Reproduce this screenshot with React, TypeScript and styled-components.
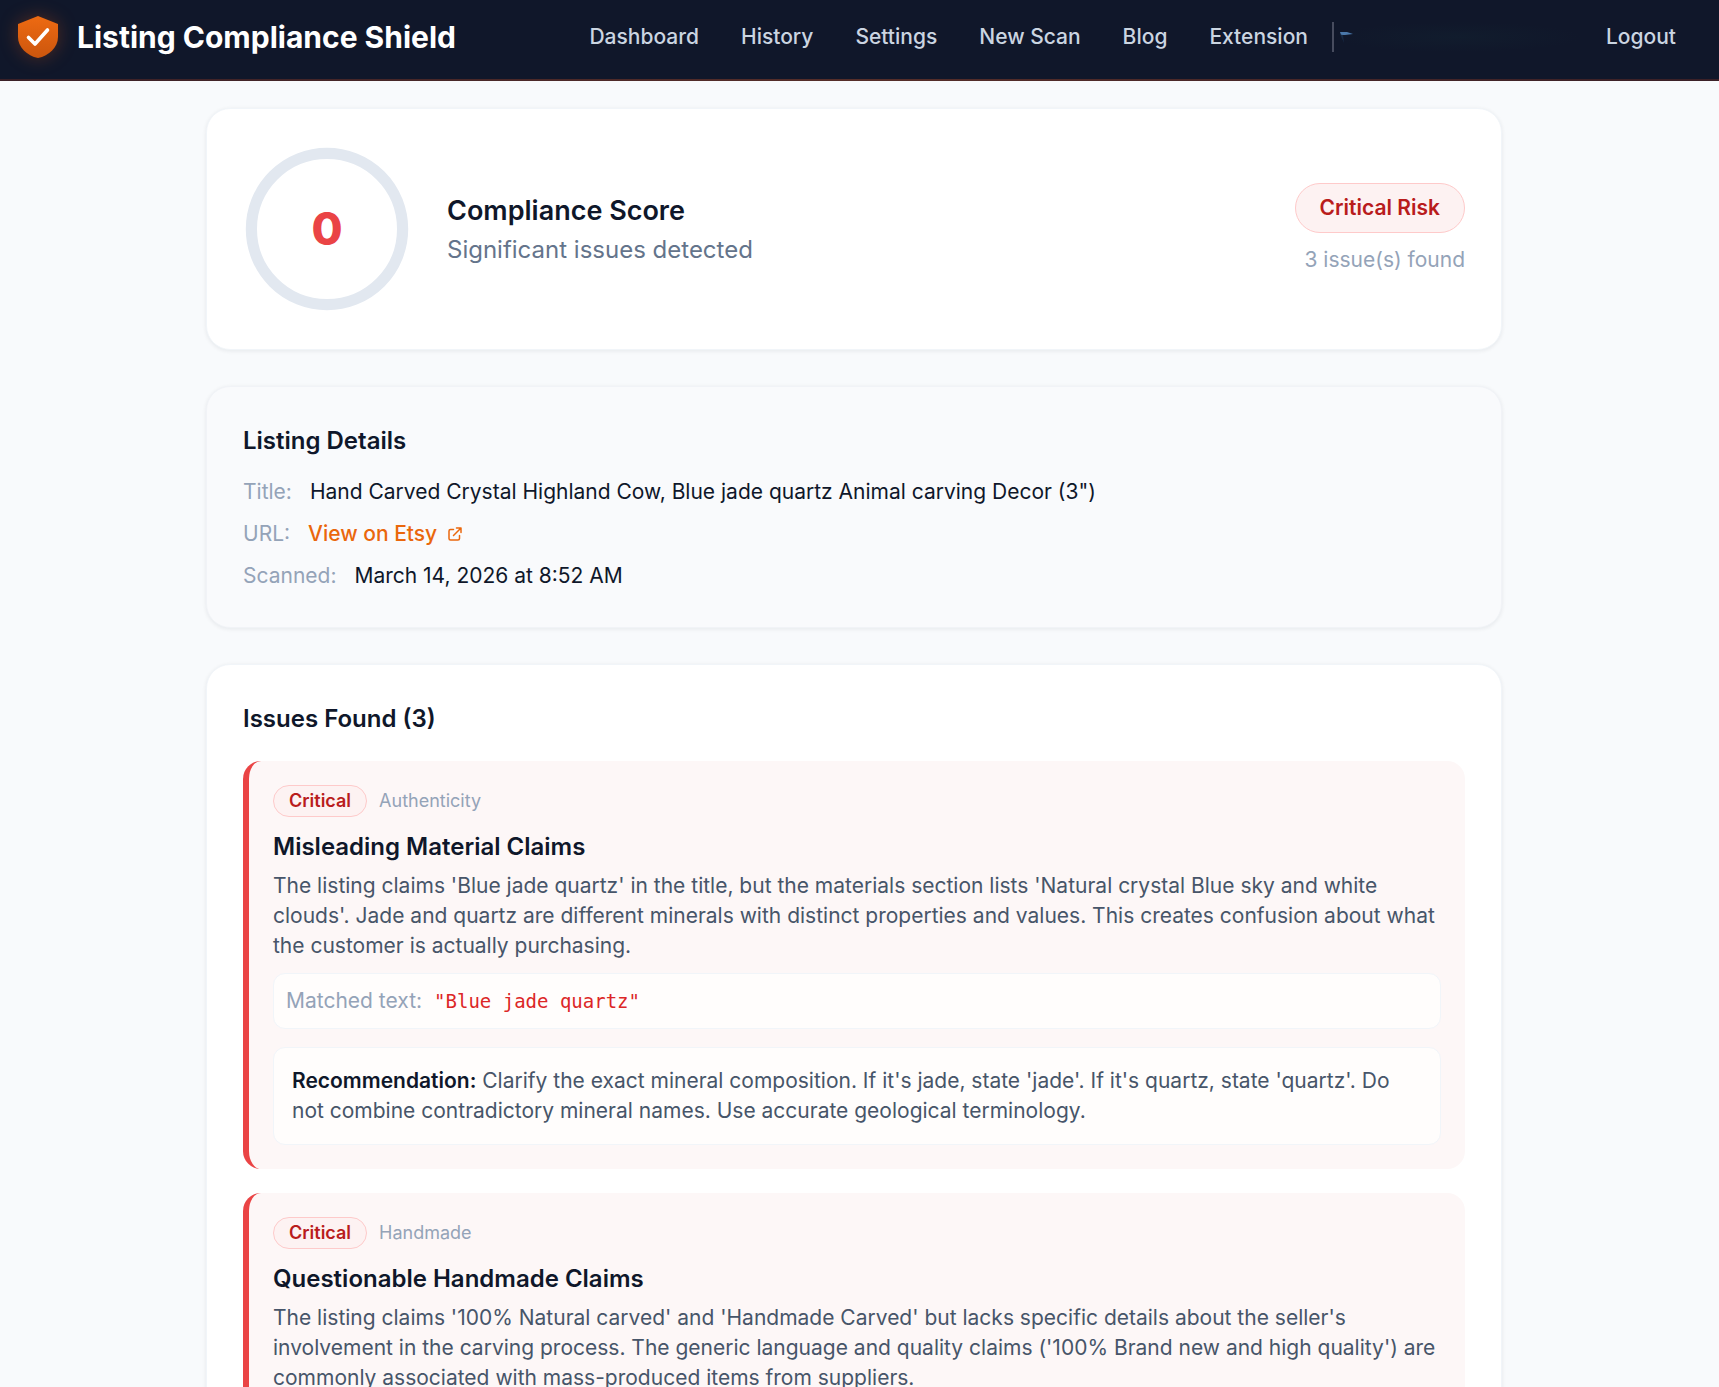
import React from "react";
import styled, { createGlobalStyle } from "styled-components";

const sans = `Inter, "Liberation Sans", sans-serif`;
const mono = `"DejaVu Sans Mono", "Liberation Mono", monospace`;

const GlobalStyle = createGlobalStyle`
  *, *::before, *::after { box-sizing: border-box; }
  html { overflow-x: hidden; }
  body {
    margin: 0;
    background: #f8fafc;
    color: #0f172a;
    font-family: ${sans};
    font-size: 21px;
    line-height: 30px;
  }
  h1, h2, h3, p, dl, dd, ul { margin: 0; padding: 0; }
`;

const Header = styled.header`
  display: flex;
  align-items: center;
  padding: 13px 43px 18px 14px;
  background: #10172a;
  border-bottom: 2px solid;
  border-image: linear-gradient(90deg, #3a2027, #562e29 50%, #3a2027) 1;
`;

const Brand = styled.a`
  display: flex;
  align-items: center;
  gap: 15px;
  color: #ffffff;
  font-size: 30px;
  line-height: 42px;
  font-weight: 700;
  text-decoration: none;
  white-space: nowrap;
`;

const LogoMark = styled.svg`
  width: 48px;
  height: 48px;
  flex: none;
  overflow: visible;
  filter: drop-shadow(0 0 9px rgba(234, 88, 12, 0.3));
`;

const Nav = styled.nav`
  display: flex;
  align-items: center;
  gap: 42px;
  margin-left: auto;
`;

const NavLink = styled.a`
  color: #cbd5e1;
  font-weight: 500;
  text-decoration: none;
  white-space: nowrap;
`;

const Account = styled.div`
  display: flex;
  align-items: center;
  width: 250px;
  height: 30px;
  margin: 0 24px;
  border-left: 2px solid #474c5e;
  background: radial-gradient(closest-side, #111c2d, #10172a);
`;

const AccountMark = styled.svg`
  width: 14px;
  height: 12px;
  margin-left: 5px;
`;

const LogoutButton = styled.button`
  padding: 0;
  border: 0;
  background: none;
  color: #cbd5e1;
  font: inherit;
  font-weight: 500;
  cursor: pointer;
`;

const Main = styled.main`
  display: flex;
  flex-direction: column;
  gap: 36px;
  max-width: 1355px;
  margin: 0 auto;
  padding: 27px 35px 36px 24px;
`;

const Page = styled.div`
  display: flow-root;
`;

const Card = styled.section<{ $muted?: boolean }>`
  padding: 36px;
  border: 1px solid ${(p) => (p.$muted ? "#f1f3f7" : "#f1f5f9")};
  border-radius: 24px;
  background: ${(p) => (p.$muted ? "#f9fafc" : "#ffffff")};
  box-shadow: 0 1px 4px rgba(15, 23, 42, 0.08);
`;

const ScoreCard = styled(Card)`
  display: flex;
  align-items: center;
  gap: 36px;
`;

const Gauge = styled.div`
  display: grid;
  place-items: center;
  width: 168px;
  height: 168px;
  flex: none;
  > * { grid-area: 1 / 1; }
`;

const GaugeValue = styled.span`
  color: #ea4445;
  font-size: 45px;
  line-height: 48px;
  font-weight: 800;
`;

const ScoreText = styled.div`
  flex: 1;
`;

const ScoreTitle = styled.h1`
  font-size: 27px;
  line-height: 42px;
  font-weight: 600;
`;

const ScoreNote = styled.p`
  color: #64748b;
  font-size: 24px;
  line-height: 36px;
`;

const RiskSummary = styled.div`
  display: flex;
  flex-direction: column;
  align-items: flex-end;
  gap: 12px;
  color: #94a3b8;
`;

const Pill = styled.span<{ $small?: boolean }>`
  padding: ${(p) => (p.$small ? "3px 15px" : "9px 24px")};
  border: 1px solid #fecaca;
  border-radius: 25px;
  background: #fdf2f2;
  color: #b91c1c;
  font-size: ${(p) => (p.$small ? "18px" : "21px")};
  line-height: ${(p) => (p.$small ? "24px" : "30px")};
  font-weight: 600;
`;

const Heading = styled.h2`
  font-size: 24px;
  line-height: 36px;
  font-weight: 600;
`;

const Details = styled.dl`
  display: flex;
  flex-direction: column;
  gap: 12px;
  margin-top: 18px;
`;

const DetailRow = styled.div`
  display: flex;
  gap: 18px;
`;

const DetailLabel = styled.dt`
  color: #94a3b8;
`;

const ListingLink = styled.a`
  display: flex;
  align-items: center;
  gap: 9px;
  color: #ea670c;
  font-weight: 500;
  text-decoration: none;
`;

const IssueList = styled.ul`
  display: flex;
  flex-direction: column;
  gap: 24px;
  margin-top: 24px;
  list-style: none;
`;

const Issue = styled.li`
  padding: 24px;
  border-left: 6px solid #ea4445;
  border-radius: 18px;
  background: #fdf7f7;
`;

const IssueMeta = styled.div`
  display: flex;
  align-items: center;
  gap: 12px;
  margin-bottom: 12px;
`;

const Category = styled.span`
  color: #94a3b8;
  font-size: 18px;
  line-height: 24px;
`;

const IssueTitle = styled.h3`
  font-size: 24px;
  line-height: 36px;
  font-weight: 600;
`;

const IssueText = styled.p`
  margin-top: 6px;
  color: #475569;
`;

const Note = styled.div`
  border: 1px solid #f1f5f9;
  border-radius: 12px;
  background: #fffdfc;
`;

const Matched = styled(Note)`
  display: flex;
  gap: 12px;
  margin-top: 12px;
  padding: 12px;
  color: #94a3b8;
`;

const MatchedText = styled.code`
  color: #dc2626;
  font-family: ${mono};
  font-size: 19px;
`;

const Recommendation = styled(Note)`
  margin-top: 18px;
  padding: 18px;
  color: #475569;

  strong {
    color: #0f172a;
    font-weight: 600;
  }
`;

const navItems = ["Dashboard", "History", "Settings", "New Scan", "Blog", "Extension"];

type IssueData = {
  category: string;
  title: string;
  text: string;
  matched?: string;
  recommendation?: string;
};

const issues: IssueData[] = [
  {
    category: "Authenticity",
    title: "Misleading Material Claims",
    text: "The listing claims 'Blue jade quartz' in the title, but the materials section lists 'Natural crystal Blue sky and white clouds'. Jade and quartz are different minerals with distinct properties and values. This creates confusion about what the customer is actually purchasing.",
    matched: '"Blue jade quartz"',
    recommendation:
      "Clarify the exact mineral composition. If it's jade, state 'jade'. If it's quartz, state 'quartz'. Do not combine contradictory mineral names. Use accurate geological terminology.",
  },
  {
    category: "Handmade",
    title: "Questionable Handmade Claims",
    text: "The listing claims '100% Natural carved' and 'Handmade Carved' but lacks specific details about the seller's involvement in the carving process. The generic language and quality claims ('100% Brand new and high quality') are commonly associated with mass-produced items from suppliers.",
  },
];

function Shield() {
  return (
    <LogoMark viewBox="0 0 48 48" aria-hidden="true">
      <defs>
        <linearGradient id="shield" x1="0" y1="0" x2="0" y2="1">
          <stop offset="0" stopColor="#ee6a12" />
          <stop offset="1" stopColor="#cb560e" />
        </linearGradient>
      </defs>
      <path
        d="M24 3 44 11V24C44 34 35 43 24 45 13 43 4 34 4 24V11Z"
        fill="url(#shield)"
      />
      <path
        d="M14.5 24.5 21 31 33.5 17"
        fill="none"
        stroke="#ffffff"
        strokeWidth="3.6"
        strokeLinecap="round"
        strokeLinejoin="round"
      />
    </LogoMark>
  );
}

function ExternalIcon() {
  return (
    <svg
      width="18"
      height="18"
      viewBox="0 0 24 24"
      fill="none"
      stroke="currentColor"
      strokeWidth="2"
      strokeLinecap="round"
      strokeLinejoin="round"
      aria-hidden="true"
    >
      <path d="M10 6H6a2 2 0 0 0-2 2v10a2 2 0 0 0 2 2h10a2 2 0 0 0 2-2v-4M14 4h6m0 0v6m0-6L10 14" />
    </svg>
  );
}

export default function App() {
  return (
    <Page>
      <GlobalStyle />
      <Header>
        <Brand href="#">
          <Shield />
          Listing Compliance Shield
        </Brand>
        <Nav>
          {navItems.map((item) => (
            <NavLink key={item} href="#">
              {item}
            </NavLink>
          ))}
        </Nav>
        <Account>
          <AccountMark viewBox="0 0 14 12" aria-hidden="true">
            <path d="M1 1H8L14 3 6 4 2 4Z" fill="#4a78aa" />
            <path d="M1 3 4 4 5 12Z" fill="#1c3554" opacity="0.6" />
          </AccountMark>
        </Account>
        <LogoutButton type="button">Logout</LogoutButton>
      </Header>
      <Main>
        <ScoreCard>
          <Gauge>
            <svg width="168" height="168" viewBox="0 0 120 120" aria-hidden="true">
              <circle cx="60" cy="60" r="54" fill="none" stroke="#e2e8f0" strokeWidth="8" />
            </svg>
            <GaugeValue>0</GaugeValue>
          </Gauge>
          <ScoreText>
            <ScoreTitle>Compliance Score</ScoreTitle>
            <ScoreNote>Significant issues detected</ScoreNote>
          </ScoreText>
          <RiskSummary>
            <Pill>Critical Risk</Pill>
            <span>3 issue(s) found</span>
          </RiskSummary>
        </ScoreCard>

        <Card $muted>
          <Heading>Listing Details</Heading>
          <Details>
            <DetailRow>
              <DetailLabel>Title:</DetailLabel>
              <dd>Hand Carved Crystal Highland Cow, Blue jade quartz Animal carving Decor (3")</dd>
            </DetailRow>
            <DetailRow>
              <DetailLabel>URL:</DetailLabel>
              <dd>
                <ListingLink href="#">
                  View on Etsy
                  <ExternalIcon />
                </ListingLink>
              </dd>
            </DetailRow>
            <DetailRow>
              <DetailLabel>Scanned:</DetailLabel>
              <dd>March 14, 2026 at 8:52 AM</dd>
            </DetailRow>
          </Details>
        </Card>

        <Card>
          <Heading>Issues Found (3)</Heading>
          <IssueList>
            {issues.map((issue) => (
              <Issue key={issue.title}>
                <IssueMeta>
                  <Pill $small>Critical</Pill>
                  <Category>{issue.category}</Category>
                </IssueMeta>
                <IssueTitle>{issue.title}</IssueTitle>
                <IssueText>{issue.text}</IssueText>
                {issue.matched && (
                  <Matched>
                    <span>Matched text:</span>
                    <MatchedText>{issue.matched}</MatchedText>
                  </Matched>
                )}
                {issue.recommendation && (
                  <Recommendation>
                    <strong>Recommendation:</strong> {issue.recommendation}
                  </Recommendation>
                )}
              </Issue>
            ))}
          </IssueList>
        </Card>
      </Main>
    </Page>
  );
}
